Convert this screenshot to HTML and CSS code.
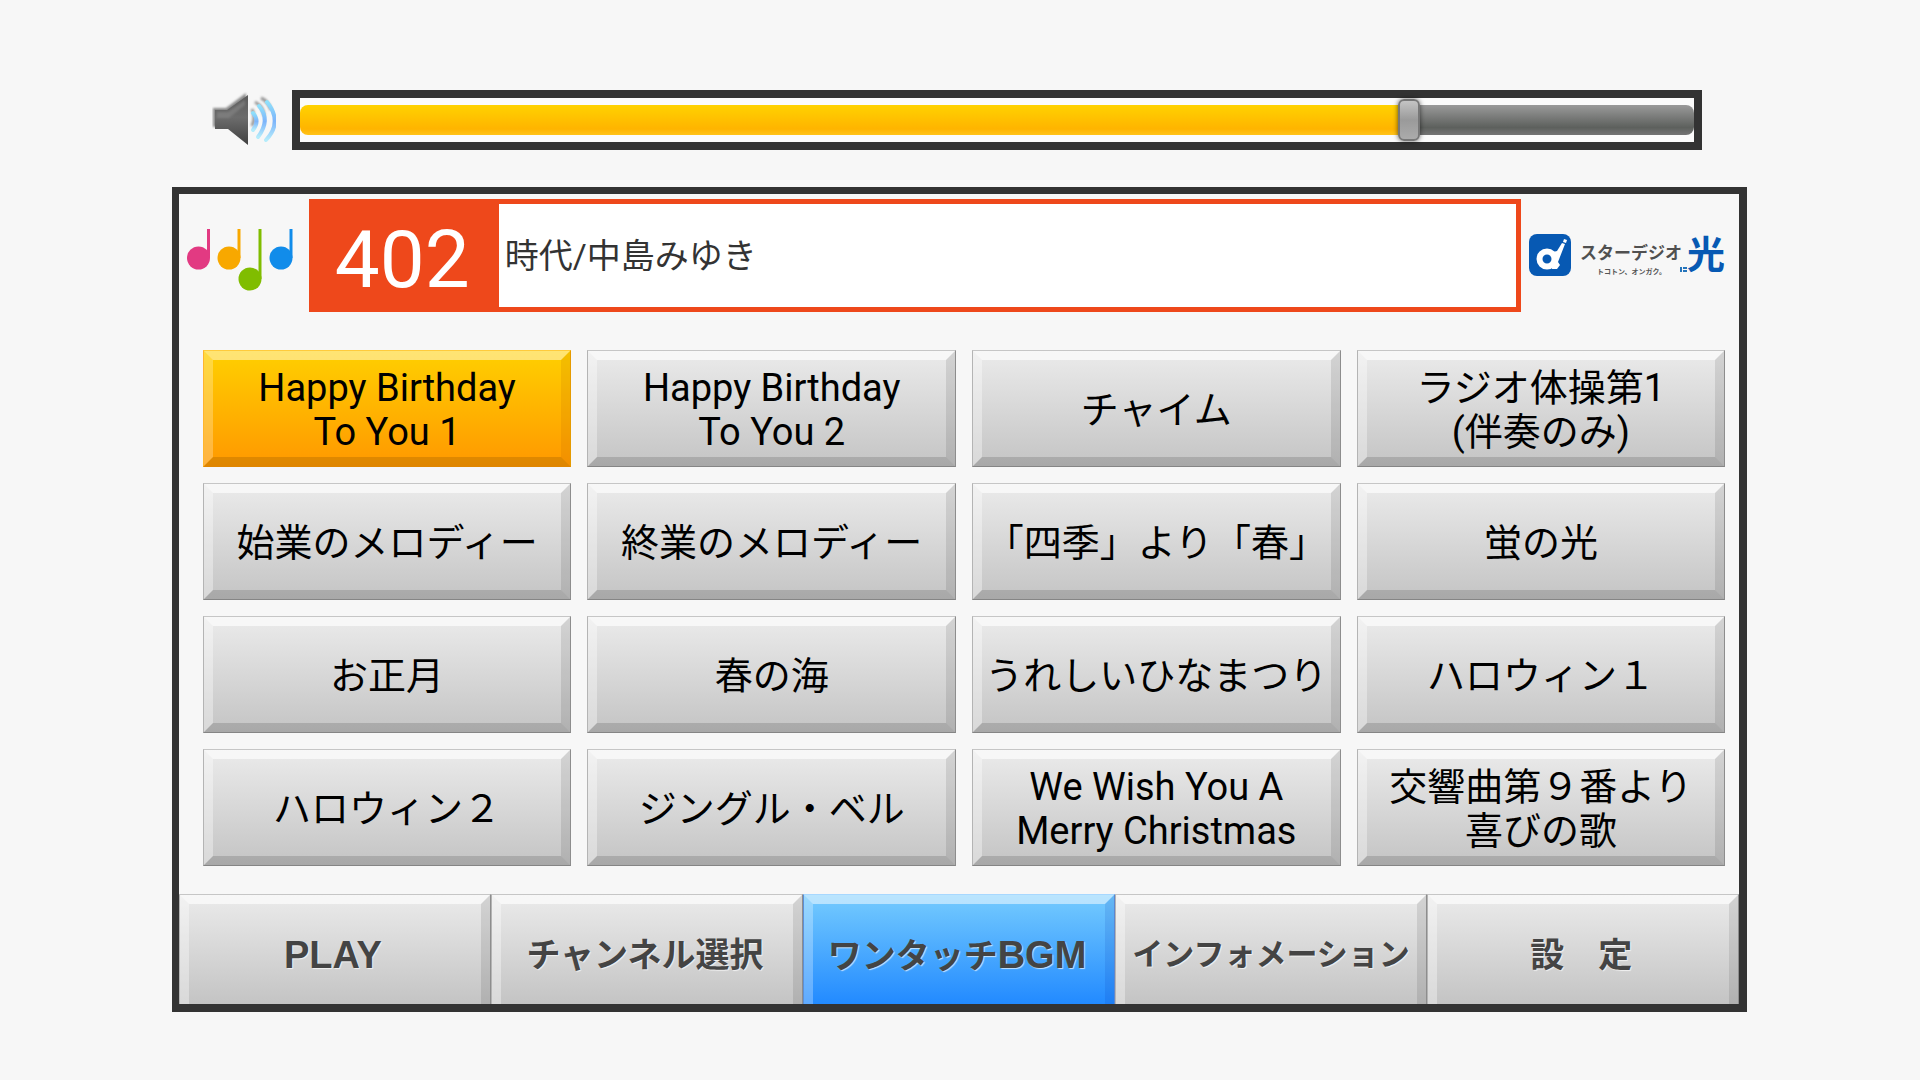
FILE: index.html
```html
<!DOCTYPE html>
<html lang="ja">
<head>
<meta charset="utf-8">
<title>ワンタッチBGM</title>
<link rel="stylesheet" href="styles.css">
</head>
<body>
<section class="volume">
  <svg class="volume-icon" viewBox="0 0 64 60" role="img" aria-label="音量">
    <defs>
      <linearGradient id="cone" x1="0" y1="0" x2="0" y2="1"><stop offset="0" stop-color="#5c5c5c"/><stop offset=".45" stop-color="#6c6c6c"/><stop offset="1" stop-color="#404040"/></linearGradient>
      <linearGradient id="wave" x1="0" y1="0" x2="0" y2="1"><stop offset="0" stop-color="#8fe0fb"/><stop offset=".5" stop-color="#7db4fa"/><stop offset="1" stop-color="#b5ecfb"/></linearGradient>
      <filter id="soft" x="-20%" y="-20%" width="140%" height="140%"><feGaussianBlur stdDeviation="1"/></filter>
    </defs>
    <path d="M1 18h13L34 3v20L14 37H1z" fill="#8b8b8b" filter="url(#soft)"/>
    <path d="M3 20h12L36 5v50L16 39H3z" fill="url(#cone)"/>
    <path d="M5 22h11L33 10v5L17 28H5z" fill="#888" opacity=".6" filter="url(#soft)"/>
    <g fill="none" stroke="#777" stroke-width="3" filter="url(#soft)" opacity=".75"><path d="M40 19q4 9 0 17"/><path d="M43 12q9 5 9 14"/><path d="M49 8q7 3 10 12"/></g>
    <g fill="none" stroke="url(#wave)" stroke-width="4" stroke-linecap="round"><path d="M41 23q7 8 0 17"/><path d="M47 16q12 14-1 31"/><path d="M55 12q16 20-1 38"/></g>
  </svg>
  <div class="volume-frame"><input class="volume-slider" type="range" min="0" max="100" value="80" aria-label="音量"></div>
</section>

<main class="panel">
  <header class="head">
    <svg class="notes" viewBox="0 0 106 64" aria-hidden="true">
      <g fill="#e23a82"><circle cx="11.500" cy="30" r="11.500"/><path d="M20 1h3v29h-3z"/></g>
      <g fill="#f8a800"><circle cx="42" cy="30" r="11.500"/><path d="M50.500 1h3v29h-3z"/></g>
      <g fill="#80bd00"><circle cx="63" cy="51" r="11.500"/><path d="M71.500 1h3v50h-3z"/></g>
      <g fill="#118cea"><circle cx="94" cy="30" r="11.500"/><path d="M102.500 1h3v29h-3z"/></g>
    </svg>
    <div class="now">
      <span class="channel">402</span>
      <span class="song">時代/中島みゆき</span>
    </div>
    <svg class="logo" viewBox="0 -10 200 80" role="img" aria-label="スターデジオ光">
      <rect x="0" y="8" width="42" height="42" rx="8" fill="#0759b3"/>
      <circle cx="18" cy="33" r="7.500" fill="none" stroke="#fff" stroke-width="6"/>
      <path d="M24 26l4-1 5-8 3 1-7 18 2 3-3 4h-5z" fill="#fff"/>
      <path d="M35 13l3 1-1 3-3-1z" fill="#fff"/>
      <text class="logo-name" x="51" y="33">スターデジオ</text>
      <text class="logo-tag" x="68" y="48">トコトン、オンガク。</text>
      <path d="M151 41h2v5h-2zM154 41h4v2h-4zM154 44h4v2h-4z" fill="#2474bb"/>
      <text class="logo-hikari" x="158" y="42">光</text>
    </svg>
  </header>

  <div class="tracks">
    <button class="key track active">Happy Birthday<br>To You 1</button>
    <button class="key track">Happy Birthday<br>To You 2</button>
    <button class="key track">チャイム</button>
    <button class="key track">ラジオ体操第1<br>(伴奏のみ)</button>
    <button class="key track">始業のメロディー</button>
    <button class="key track">終業のメロディー</button>
    <button class="key track">「四季」より「春」</button>
    <button class="key track">蛍の光</button>
    <button class="key track">お正月</button>
    <button class="key track">春の海</button>
    <button class="key track">うれしいひなまつり</button>
    <button class="key track">ハロウィン１</button>
    <button class="key track">ハロウィン２</button>
    <button class="key track">ジングル・ベル</button>
    <button class="key track">We Wish You A<br>Merry Christmas</button>
    <button class="key track">交響曲第９番より<br>喜びの歌</button>
  </div>

  <nav class="tabs">
    <button class="key tab"><span class="latin">PLAY</span></button>
    <button class="key tab">チャンネル選択</button>
    <button class="key tab current"><span>ワンタッチ<span class="latin">BGM</span></span></button>
    <button class="key tab long">インフォメーション</button>
    <button class="key tab">設　定</button>
  </nav>
</main>
</body>
</html>
```
FILE: styles.css
```css
* { box-sizing: border-box; }

body {
  margin: 0;
  padding: 90px 9% 68px calc(9% - 1px);
  background: #f7f7f7;
  font-family: Roboto, "Noto Sans CJK JP", sans-serif;
  color: #000;
}

button { font: inherit; color: inherit; margin: 0; }

/* Volume */
.volume {
  display: flex;
  align-items: center;
  gap: 16px;
  padding: 0 45px 0 40px;
  margin-bottom: 37px;
}
.volume-icon { width: 64px; height: 60px; flex: none; }
.volume-frame {
  flex: 1;
  display: flex;
  align-items: center;
  height: 60px;
  border: 8px solid #333;
  background: #fbfbfb;
}
.volume-slider {
  appearance: none;
  -webkit-appearance: none;
  width: 100%;
  height: 30px;
  margin: 0;
  border-radius: 8px;
  background:
    linear-gradient(#ffd200, #ffb400 80%, #ffc31a) 0 0 / 80% 100% no-repeat,
    linear-gradient(#9a9a9a, #5d605d 75%, #747474);
}
.volume-slider::-webkit-slider-thumb {
  -webkit-appearance: none;
  width: 22px;
  height: 42px;
  border: 2px solid #777;
  border-radius: 6px;
  background: linear-gradient(#c4c4c4, #9a9a9a 50%, #ababab);
  box-shadow: 0 0 5px rgba(0, 0, 0, .6);
}

/* Panel */
.panel {
  border: solid #333;
  border-width: 7px 8px 8px 7px;
}
.head {
  display: grid;
  grid-template-columns: 130px 1fr 218px;
  align-items: center;
  padding-top: 5px;
}
.notes { width: 106px; height: 64px; margin: 8px 0 0 8px; }
.now {
  display: flex;
  height: 113px;
  border: 5px solid #ee481b;
  background: #fff;
}
.channel {
  display: flex;
  align-items: center;
  justify-content: center;
  width: 185px;
  padding: 8px 8px 0 0;
  background: #ee481b;
  color: #fff;
  font-size: 80px;
  line-height: 80px;
}
.song {
  align-self: center;
  padding-left: 6px;
  font-size: 34px;
  line-height: 48px;
  color: #333;
}
.logo { width: 200px; height: 80px; margin-left: 8px; }
.logo text { font-family: "Noto Sans CJK JP", sans-serif; font-weight: 700; }
.logo-name { font-size: 17px; fill: #505050; }
.logo-tag { font-size: 7px; fill: #555; }
.logo-hikari { font-size: 38px; fill: #0759b3; }

/* Bevelled keys */
.key {
  position: relative;
  display: flex;
  align-items: center;
  justify-content: center;
  padding: 0;
  border: 10px solid;
  border-color: rgba(255, 255, 255, .65) rgba(0, 0, 0, .1) rgba(0, 0, 0, .14) rgba(255, 255, 255, .35);
  background: linear-gradient(#ebebeb, #c4c4c4) border-box;
  text-align: center;
  white-space: nowrap;
}
.key::before {
  content: "";
  position: absolute;
  inset: -10px;
  border: 1px solid;
  border-color: #c6c6c6 #8d8d8d #858585 #b4b4b4;
}

.tracks {
  display: grid;
  grid-template-columns: repeat(4, 1fr);
  gap: 16px;
  padding: 38px 14px 28px 24px;
}
.track {
  height: 117px;
  padding-top: 2px;
  font-size: 38px;
  line-height: 44px;
}
.track.active {
  background: linear-gradient(#ffd000, #ff9800) border-box;
  border-color: rgba(255, 255, 255, .45) rgba(160, 80, 0, .12) rgba(130, 80, 0, .25) rgba(255, 255, 255, .25);
}
.track.active::before { border-color: #ffcb3c #e59a00 #e08600 #ffb62e; }

/* Tabs */
.tabs { display: grid; grid-template-columns: repeat(5, 1fr); }
.tab {
  height: 110px;
  padding: 2px 4px 0 0;
  border-bottom: 0;
  font-family: "Liberation Sans", "Noto Sans CJK JP", sans-serif;
  font-size: 34px;
  line-height: 44px;
  font-weight: 700;
  color: #444;
  text-shadow: 1px 1px 1px rgba(255, 255, 255, .7);
}
.tab::before { bottom: 0; border-bottom: 0; }
.latin { font-size: 38px; }
.long { padding-right: 0; font-size: 31px; }
.current {
  background: linear-gradient(#76ccfe, #228aff) border-box;
  border-color: rgba(255, 255, 255, .5) rgba(0, 40, 160, .12) transparent rgba(255, 255, 255, .28);
}
.current::before { border-color: #a8d8ff #5b86d0 transparent #5b8fd8; }
```
